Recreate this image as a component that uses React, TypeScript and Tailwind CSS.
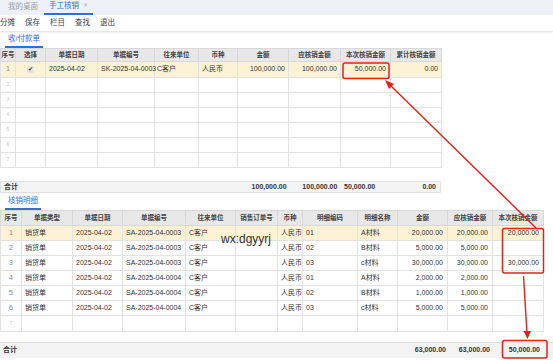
import React from 'react'

const topCols = [15, 30, 52, 57, 44, 39, 51, 52, 50, 51]
const topHead = ['序号', '选择', '单据日期', '单据编号', '往来单位', '币种', '金额', '应核销金额', '本次核销金额', '累计核销金额']

const botCols = [21, 51, 50, 63, 50, 42, 25, 55, 40, 50, 45, 51]
const botHead = ['序号', '单据类型', '单据日期', '单据编号', '往来单位', '销售订单号', '币种', '明细编码', '明细名称', '金额', '应核销金额', '本次核销金额']

const details = [
    ['1', '销货单', '2025-04-02', 'SA-2025-04-0003', 'C客户', '', '人民币', '01', 'A材料', '20,000.00', '20,000.00', '20,000.00'],
    ['2', '销货单', '2025-04-02', 'SA-2025-04-0003', 'C客户', '', '人民币', '02', 'B材料', '5,000.00', '5,000.00', ''],
    ['3', '销货单', '2025-04-02', 'SA-2025-04-0003', 'C客户', '', '人民币', '03', 'c材料', '30,000.00', '30,000.00', '30,000.00'],
    ['4', '销货单', '2025-04-02', 'SA-2025-04-0004', 'C客户', '', '人民币', '01', 'A材料', '2,000.00', '2,000.00', ''],
    ['5', '销货单', '2025-04-02', 'SA-2025-04-0004', 'C客户', '', '人民币', '02', 'B材料', '1,000.00', '1,000.00', ''],
    ['6', '销货单', '2025-04-02', 'SA-2025-04-0004', 'C客户', '', '人民币', '03', 'c材料', '5,000.00', '5,000.00', ''],
]

// numeric columns are right aligned
const topRight = [6, 7, 8, 9]
const botRight = [9, 10, 11]

function Cols({ widths }: { widths: number[] }) {
    return (
        <colgroup>
            {widths.map((w, i) => (
                <col key={i} style={{ width: w }} />
            ))}
        </colgroup>
    )
}

function SectionTab({ label }: { label: string }) {
    return (
        <div className="h-[16px] flex items-end pl-[5px]">
            <div className="px-[3px] pb-[1px] text-[7.5px] leading-[12px] text-[#2f6fd6] border-b-2 border-[#2f6fd6]">
                {label}
            </div>
        </div>
    )
}

export default function App() {
    return (
        <div className="relative w-[553px] h-[360px] overflow-hidden bg-white text-[7px] text-[#333] font-['Liberation_Sans','Noto_Sans_CJK_SC',sans-serif]">
            {/* tabs */}
            <div className="h-[15px] bg-[#eef1f7] flex items-end pl-[8px] gap-[6px]">
                <div className="pb-[3px] text-[7.5px] text-[#9aa0aa]">我的桌面</div>
                <div className="flex items-center gap-[4px] px-[5px] pb-[2px] border-b-2 border-[#2f6fd6] text-[7.5px] text-[#2f6fd6]">
                    手工核销
                    <span className="text-[#b0b6c0] text-[6px]">✕</span>
                </div>
            </div>

            {/* toolbar */}
            <div className="h-[17px] flex items-center gap-[10px] text-[7.5px] text-[#444] border-b border-[#e6e8ec] shadow-[0_1px_2px_rgba(0,0,0,0.06)]">
                <span>分摊</span>
                <span>保存</span>
                <span>栏目</span>
                <span>查找</span>
                <span>退出</span>
            </div>

            <SectionTab label="收/付款单" />

            {/* receipts table */}
            <table className="table-fixed border-collapse w-[441px]">
                <Cols widths={topCols} />
                <thead>
                    <tr className="h-[13px] bg-[#e8e8e8]">
                        {topHead.map((h) => (
                            <th key={h} className="border border-[#d8d8d8] font-bold text-[6.5px] text-[#444] p-0 text-center whitespace-nowrap">
                                {h}
                            </th>
                        ))}
                    </tr>
                </thead>
                <tbody>
                    <tr className="h-[16px] bg-[#fdf3d4]">
                        <td className="border border-[#e2e2e2] text-center text-[#888]">1</td>
                        <td className="border border-[#e2e2e2] text-center">
                            <span className="inline-flex w-[7px] h-[7px] items-center justify-center bg-[#e4e4e4] rounded-[1px] text-[6px] leading-none text-[#333]">✔</span>
                        </td>
                        <td className="border border-[#e2e2e2] pl-[3px] whitespace-nowrap">2025-04-02</td>
                        <td className="border border-[#e2e2e2] pl-[3px] whitespace-nowrap">SK-2025-04-0003</td>
                        <td className="border border-[#e2e2e2] pl-[2px]">C客户</td>
                        <td className="border border-[#e2e2e2] pl-[3px]">人民币</td>
                        <td className="border border-[#e2e2e2] pr-[3px] text-right">100,000.00</td>
                        <td className="border border-[#e2e2e2] pr-[3px] text-right">100,000.00</td>
                        <td className="border border-[#e2e2e2] pr-[4px] text-right">50,000.00</td>
                        <td className="border border-[#e2e2e2] pr-[3px] text-right">0.00</td>
                    </tr>
                    {[2, 3, 4, 5, 6, 7].map((n) => (
                        <tr key={n} className="h-[15px]">
                            {topCols.map((_, i) => (
                                <td key={i} className={`border border-[#e2e2e2] text-center text-[5px] text-[#c4c4c4] ${topRight.includes(i) ? 'text-right' : ''}`}>
                                    {i === 0 ? n : ''}
                                </td>
                            ))}
                        </tr>
                    ))}
                </tbody>
            </table>

            {/* receipts totals */}
            <div className="mt-[13px] w-[441px] h-[12px] flex items-center bg-[#f3f3f3] border border-[#e0e0e0] rounded-[1px] font-bold">
                <div className="w-[237px] pl-[3px]">合计</div>
                <div className="w-[51px] text-right pr-[1px]">100,000.00</div>
                <div className="w-[52px] text-right pr-[2px]">100,000.00</div>
                <div className="w-[50px] text-right pr-[14px]">50,000.00</div>
                <div className="w-[51px] text-right pr-[4px]">0.00</div>
            </div>

            <div className="mt-[1px]">
                <SectionTab label="核销明细" />
            </div>

            {/* detail table */}
            <table className="table-fixed border-collapse w-[543px]">
                <Cols widths={botCols} />
                <thead>
                    <tr className="h-[15px] bg-[#e8e8e8]">
                        {botHead.map((h) => (
                            <th key={h} className="border border-[#d8d8d8] font-bold text-[6.5px] text-[#444] p-0 text-center whitespace-nowrap">
                                {h}
                            </th>
                        ))}
                    </tr>
                </thead>
                <tbody>
                    {details.map((row, r) => (
                        <tr key={r} className={`h-[15px] ${r === 0 ? 'bg-[#fdf3d4]' : ''}`}>
                            {row.map((c, i) => (
                                <td
                                    key={i}
                                    className={`border border-[#e2e2e2] whitespace-nowrap overflow-hidden ${
                                        i === 0 ? 'text-center text-[#888]' : botRight.includes(i) ? 'text-right pr-[4px]' : 'pl-[3px]'
                                    }`}
                                >
                                    {c}
                                </td>
                            ))}
                        </tr>
                    ))}
                    <tr className="h-[16px]">
                        {botCols.map((_, i) => (
                            <td key={i} className="border border-[#e2e2e2] text-center text-[5px] text-[#c4c4c4]">
                                {i === 0 ? 7 : ''}
                            </td>
                        ))}
                    </tr>
                </tbody>
            </table>

            {/* detail totals */}
            <div className="mt-[10px] w-[553px] h-[16px] flex items-center bg-[#f3f3f3] border-t border-[#e0e0e0] font-bold">
                <div className="w-[397px] pl-[3px]">合计</div>
                <div className="w-[50px] text-right pr-[1px]">63,000.00</div>
                <div className="w-[45px] text-right pr-[2px]">63,000.00</div>
                <div className="w-[51px] text-right pr-[3px]">50,000.00</div>
            </div>

            {/* watermark */}
            <div className="absolute left-[221px] top-[230px] text-[12px] text-[#333] font-['Liberation_Sans',sans-serif]">
                wx:dgyyrj
            </div>

            {/* annotations */}
            <svg className="absolute left-0 top-0 pointer-events-none" width="553" height="360" viewBox="0 0 553 360">
                <g fill="none" stroke="#e3211c" strokeWidth="1.5">
                    <rect x="343" y="63" width="46" height="15.5" rx="2" />
                    <rect x="502.5" y="228.5" width="41" height="44.5" rx="2" />
                    <rect x="502.5" y="340.5" width="44.5" height="17.5" rx="2" />
                </g>
                <line x1="389" y1="84" x2="536" y2="228" stroke="#e3211c" strokeWidth="1.4" />
                <polygon points="385,80 394,84 389,89" fill="#e3211c" />
                <line x1="523.5" y1="276" x2="527" y2="333" stroke="#e3211c" strokeWidth="1.4" />
                <polygon points="527.5,339 523.5,331 531,331" fill="#e3211c" />
            </svg>
        </div>
    )
}
